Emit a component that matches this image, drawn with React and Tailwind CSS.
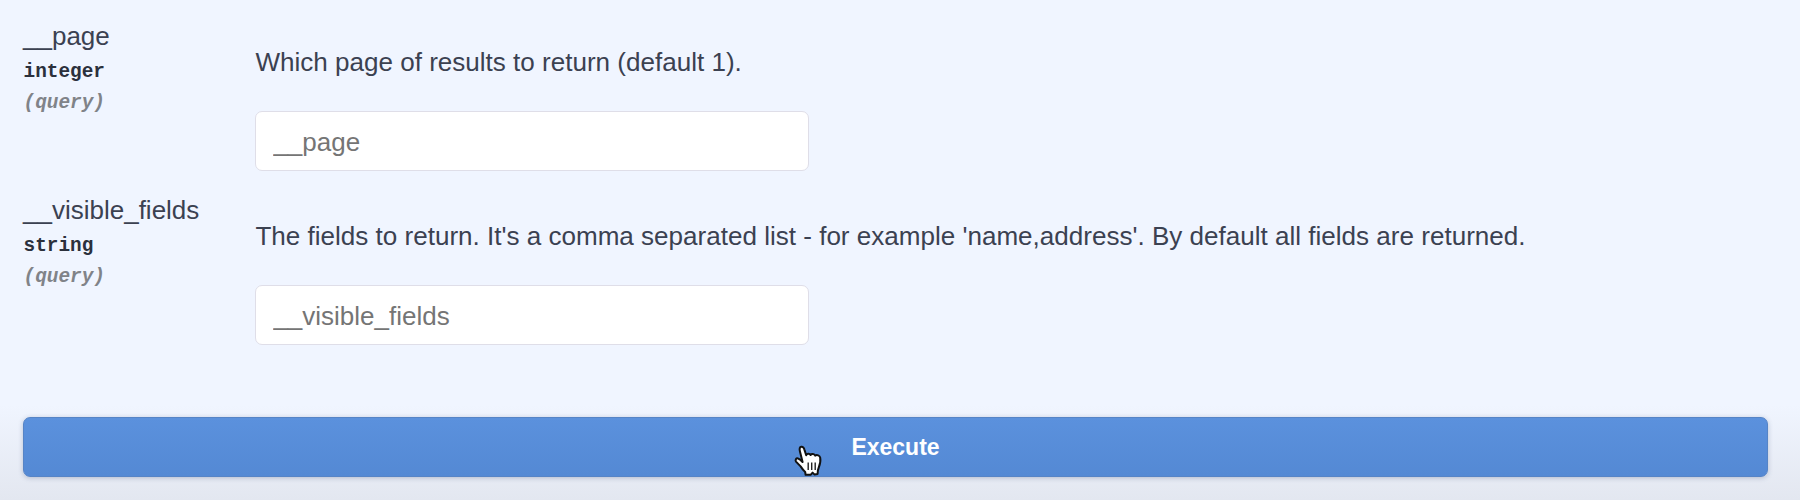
const PARAMS = [
  {
    name: "__page",
    type: "integer",
    description: "Which page of results to return (default 1).",
  },
  {
    name: "__visible_fields",
    type: "string",
    description:
      "The fields to return. It's a comma separated list - for example 'name,address'. By default all fields are returned.",
  },
];

function HandPointer() {
  return (
    <svg
      className="absolute left-[770px] top-[27px]"
      width="32"
      height="34"
      viewBox="0 0 32 34"
      aria-hidden="true"
    >
      <path
        d="M9.6 18 L6.9 7.2 C6.2 4.6 6.8 3 8.3 2.8 C9.9 2.6 10.9 3.8 11.4 5.6 L13.2 11.2 C13.6 9.4 16.8 9.2 17.6 11 C18.4 9.6 21.4 9.8 22.2 11.6 C23.8 10.4 26.8 11.4 27.2 13.6 C27.8 16.8 26.9 20.6 25.8 23.4 L24.9 26.4 L24.6 30 L21.6 30.6 L19.6 28.6 L17.6 30.8 L12.6 30.8 L12.2 28 C10.4 26.4 9 24.6 7.6 22.4 L3 17.6 C2 15.8 3 14 5 14.4 C6.8 14.8 8.2 16.4 9.6 18 Z"
        fill="#fff"
        stroke="#111"
        strokeWidth="2"
        strokeLinejoin="round"
      />
      <path d="M15.2 18.5v7.5M18.7 18.5v7.5M22.2 18.5v7.5" stroke="#222" strokeWidth="1.4" fill="none" />
    </svg>
  );
}

function ParamRow({ param }) {
  return (
    <div className="flex h-[174px] items-start">
      <div className="w-[232.4px] shrink-0">
        <div className="h-[39px] text-[26px] leading-[30px] text-[#3b4151]">{param.name}</div>
        <div className="h-[31px] pl-[0.5px] font-['Courier_New','Liberation_Mono',monospace] text-[19.4px] font-bold leading-[24px] text-[#2b303c]">
          {param.type}
        </div>
        <div className="pl-[0.5px] font-['Courier_New','Liberation_Mono',monospace] text-[19.4px] font-bold italic leading-[24px] text-[#808388]">
          (query)
        </div>
      </div>
      <div className="pt-[26px]">
        <p className="whitespace-nowrap text-[26.05px] leading-[30px] text-[#3b4151]">
          {param.description}
        </p>
        <input
          className="mt-[34px] block h-[60px] w-[554px] rounded-[7px] border border-[#dfdee8] bg-white px-[17px] pt-[2px] text-[26px] placeholder:text-[#757575]"
          placeholder={param.name}
        />
      </div>
    </div>
  );
}

export default function App() {
  return (
    <div className="h-[500px] w-[1800px] overflow-hidden bg-[linear-gradient(to_bottom,#f0f5ff_0px,#f0f5ff_405px,#e3e7f0_500px)] pl-[23px] pt-[21px] font-['Liberation_Sans',Arial,sans-serif]">
      {PARAMS.map((param) => (
        <ParamRow key={param.name} param={param} />
      ))}
      <div className="relative mt-[48px] w-[1745px]">
        <button className="block h-[60px] w-full rounded-[7px] border border-[#5684c6] bg-[linear-gradient(to_bottom,#5b91dd,#5489d4)] text-[23px] font-bold text-white shadow-[0_1px_5px_rgba(60,80,120,0.3)]">
          Execute
        </button>
        <HandPointer />
      </div>
    </div>
  );
}
